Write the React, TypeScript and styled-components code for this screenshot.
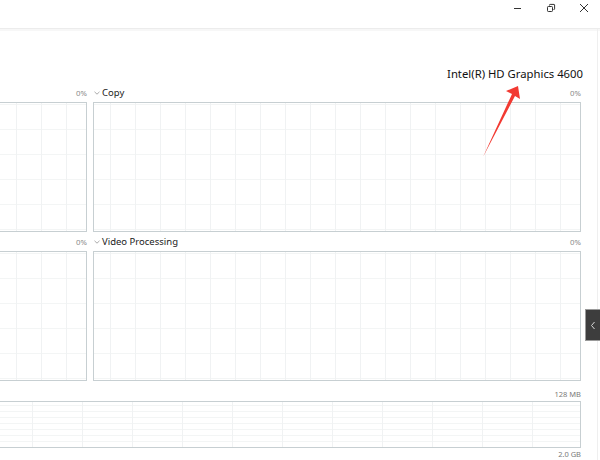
import styled, { createGlobalStyle } from 'styled-components';

const GlobalStyle = createGlobalStyle`
  html, body {
    margin: 0;
    padding: 0;
    background: #ffffff;
  }
  body {
    font-family: 'Noto Sans', 'Open Sans', sans-serif;
    color: #1f1f1f;
  }
`;

interface Engine {
  id: string;
  name?: string;
  value: string;
}

// the left column is scrolled out of view, only its percent shows
const rows: Engine[][] = [
  [
    { id: '3d', value: '0%' },
    { id: 'copy', name: 'Copy', value: '0%' },
  ],
  [
    { id: 'decode', value: '0%' },
    { id: 'processing', name: 'Video Processing', value: '0%' },
  ],
];

function WindowControls() {
  return (
    <Controls>
      <ControlButton aria-label='minimize'>
        <svg width='10' height='10' viewBox='0 0 10 10'>
          <path d='M1 5.5h7' stroke='#333' strokeWidth='1' />
        </svg>
      </ControlButton>
      <ControlButton aria-label='restore'>
        <svg width='10' height='10' viewBox='0 0 10 10'>
          <rect x='1.5' y='3.5' width='5' height='5' rx='0.8' fill='none' stroke='#333' />
          <path d='M3.5 2.5V2a.6.6 0 0 1 .6-.6H8a.6.6 0 0 1 .6.6v3.9a.6.6 0 0 1-.6.6h-.5' fill='none' stroke='#333' />
        </svg>
      </ControlButton>
      <ControlButton aria-label='close'>
        <svg width='10' height='10' viewBox='0 0 10 10'>
          <path d='M1 1l8 8M9 1l-8 8' stroke='#333' strokeWidth='1' />
        </svg>
      </ControlButton>
    </Controls>
  );
}

function EngineCell({ engine }: { engine: Engine }) {
  return (
    <Cell>
      <CellHeader>
        <EngineName>
          {engine.name && (
            <>
              <svg width='6' height='4' viewBox='0 0 6 4'>
                <path d='M0.5 0.8L3 3.2 5.5 0.8' fill='none' stroke='#a0a0a0' strokeWidth='0.9' />
              </svg>
              {engine.name}
            </>
          )}
        </EngineName>
        <Percent>{engine.value}</Percent>
      </CellHeader>
      <Chart $height={130} />
    </Cell>
  );
}

function App() {
  return (
    <>
      <GlobalStyle />
      <Page>
        <TitleBar>
          <WindowControls />
        </TitleBar>
        <Body>
          <GpuTitle>Intel(R) HD Graphics 4600</GpuTitle>
          <EngineGrid>
            {rows.map((row) =>
              row.map((engine) => <EngineCell key={engine.id} engine={engine} />)
            )}
          </EngineGrid>
          <MemoryBlock>
            <Scale>128 MB</Scale>
            <Chart $height={47} $wide />
            <Scale>2.0 GB</Scale>
          </MemoryBlock>
        </Body>
        <SideTab>
          <svg width='6' height='9' viewBox='0 0 6 9'>
            <path d='M4.5 1L1.5 4.5 4.5 8' fill='none' stroke='#d8d8d8' strokeWidth='1' />
          </svg>
        </SideTab>
        <Arrow width='600' height='460' viewBox='0 0 600 460'>
          <path d='M483 157L512 94L506 91L518 86L520 99L515 96Z' fill='#f23a32' />
        </Arrow>
      </Page>
    </>
  );
}

const Page = styled.div`
  position: relative;
  width: 600px;
  height: 460px;
  overflow: hidden;
  background: #ffffff;
`;

const TitleBar = styled.div`
  height: 28px;
  display: flex;
  justify-content: flex-end;
  border-bottom: 1px solid #ececec;
  box-shadow: 0 2px 0 #f7f7f7;
`;

const Controls = styled.div`
  display: flex;
  align-items: flex-start;
`;

const ControlButton = styled.div`
  width: 33px;
  height: 16px;
  display: flex;
  align-items: center;
  justify-content: center;
`;

const Body = styled.div`
  display: flex;
  flex-direction: column;
  align-items: flex-end;
  padding-right: 16px;
  height: 431px;
  border-right: 1px solid #efefef;
  margin-right: 2px;
`;

const GpuTitle = styled.div`
  margin-top: 36px;
  margin-right: -2px;
  height: 18px;
  line-height: 18px;
  font-size: 11.3px;
  color: #111;
`;

const EngineGrid = styled.div`
  display: grid;
  grid-template-columns: 488px 488px;
  column-gap: 6px;
`;

const Cell = styled.div`
  display: flex;
  flex-direction: column;
`;

const CellHeader = styled.div`
  height: 19px;
  display: flex;
  align-items: center;
  justify-content: space-between;
`;

const EngineName = styled.div`
  display: flex;
  align-items: center;
  gap: 2px;
  font-size: 9.5px;
  color: #222;
  padding-left: 1px;
`;

const Percent = styled.div`
  font-size: 7.8px;
  color: #8a8a8a;
  padding-right: 0;
`;

const Chart = styled.div<{ $height: number; $wide?: boolean }>`
  box-sizing: border-box;
  height: ${({ $height }) => $height}px;
  width: ${({ $wide }) => ($wide ? '982px' : '100%')};
  border: 1px solid #c7cfd2;
  background-color: #ffffff;
  background-image: linear-gradient(to right, #f0f2f3 1px, transparent 1px),
    linear-gradient(to bottom, #f3f5f5 1px, transparent 1px);
  background-size: ${({ $wide }) => ($wide ? '50px 6px' : '25px 25px')};
  background-position: ${({ $wide }) => ($wide ? '32px 3px' : '16px 1px')};
`;

const MemoryBlock = styled.div`
  display: flex;
  flex-direction: column;
  align-items: flex-end;
  margin-top: 7px;
`;

const Scale = styled.div`
  height: 13px;
  line-height: 13px;
  font-size: 7.5px;
  color: #7a7a7a;
`;

const SideTab = styled.div`
  position: absolute;
  right: 0;
  top: 309px;
  width: 14px;
  height: 30px;
  background: #3d3d3d;
  border: 1px solid #9a9a9a;
  border-right: none;
  display: flex;
  align-items: center;
  justify-content: center;
`;

const Arrow = styled.svg`
  position: absolute;
  left: 0;
  top: 0;
  pointer-events: none;
`;

export default App;
